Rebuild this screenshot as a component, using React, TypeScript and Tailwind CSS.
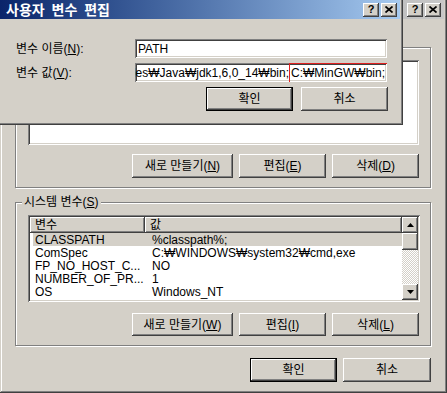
import React from 'react';

const raised = 'shadow-[inset_-1px_-1px_#404040,inset_1px_1px_#fff,inset_-2px_-2px_#808080,inset_2px_2px_#d4d0c8]';
const frame = 'shadow-[inset_-1px_-1px_#404040,inset_1px_1px_#d4d0c8,inset_-2px_-2px_#808080,inset_2px_2px_#fff]';
const sunken = 'shadow-[inset_1px_1px_#808080,inset_-1px_-1px_#fff,inset_2px_2px_#404040,inset_-2px_-2px_#d4d0c8]';
const etched = 'border border-[#808080] shadow-[inset_1px_1px_#fff,1px_1px_#fff]';

function TitleBtn({ kind }: { kind: 'help' | 'close' }) {
  return (
    <div className={`w-[16px] h-[14px] bg-[#d4d0c8] flex items-center justify-center ${raised}`}>
      {kind === 'help' ? (
        <span className="text-[11px] font-bold leading-none -mt-[1px]">?</span>
      ) : (
        <svg width="8" height="7" viewBox="0 0 8 7" className="-mt-[1px]">
          <path d="M0.5 0.5 L7.5 6.5 M7.5 0.5 L0.5 6.5" stroke="#000" strokeWidth="1.7" />
        </svg>
      )}
    </div>
  );
}

function Btn({ children, w = 'w-[87px]', h = 'h-[23px]', def = false }: { children: React.ReactNode; w?: string; h?: string; def?: boolean }) {
  if (def) {
    return (
      <div className={`${w} ${h} border border-black bg-[#d4d0c8]`}>
        <div className={`w-full h-full flex items-center justify-center ${raised}`}>{children}</div>
      </div>
    );
  }
  return <div className={`${w} ${h} bg-[#d4d0c8] flex items-center justify-center ${raised}`}>{children}</div>;
}

function Arrow({ up }: { up?: boolean }) {
  return (
    <div className={`w-[16px] h-[16px] bg-[#d4d0c8] flex items-center justify-center ${raised}`}>
      <svg width="7" height="4" viewBox="0 0 7 4">
        <polygon points={up ? '0,4 7,4 3.5,0' : '0,0 7,0 3.5,4'} fill="#000" />
      </svg>
    </div>
  );
}

const rows: [string, string][] = [
  ['CLASSPATH', '%classpath%;'],
  ['ComSpec', 'C:₩WINDOWS₩system32₩cmd,exe'],
  ['FP_NO_HOST_C...', 'NO'],
  ['NUMBER_OF_PR...', '1'],
  ['OS', 'Windows_NT'],
  ['Path', 'C:₩Program Files₩Common Files₩Nokia'],
];

export default function App() {
  return (
    <div className="relative w-[447px] h-[393px] overflow-hidden bg-[#d4d0c8] font-['Liberation_Sans','Noto_Sans_CJK_KR',sans-serif] text-[12px] leading-none text-black">
      {/* 환경 변수 (뒤 창) */}
      <div className={`-mt-[3px] h-[396px] w-[447px] p-[3px] flex flex-col bg-[#d4d0c8] ${frame}`}>
        <div className="h-[19px] shrink-0 flex items-center justify-end gap-[2px] pr-[3px] bg-linear-to-r from-[#808080] to-[#c8c8c8]">
          <TitleBtn kind="help" />
          <TitleBtn kind="close" />
        </div>

        <div className="flex flex-col pl-[12px]">
          {/* 사용자 변수 */}
          <div className={`mt-[28px] w-[416px] h-[141px] flex flex-col ${etched}`}>
            <div className={`ml-[12px] mt-[12px] w-[391px] h-[85px] bg-white ${sunken}`} />
            <div className="mt-[9px] flex justify-end gap-[6px] pr-[11px]">
              <Btn w="w-[101px]" h="h-[24px]">새로 만들기(<u>N</u>)</Btn>
              <Btn h="h-[24px]">편집(<u>E</u>)</Btn>
              <Btn h="h-[24px]">삭제(<u>D</u>)</Btn>
            </div>
          </div>

          {/* 시스템 변수 */}
          <div className={`relative mt-[14px] w-[416px] h-[144px] flex flex-col ${etched}`}>
            <span className="absolute left-[6px] -top-[7px] px-[2px] bg-[#d4d0c8]">시스템 변수(<u>S</u>)</span>
            <div className={`ml-[12px] mt-[12px] w-[392px] h-[87px] p-[2px] bg-white flex ${sunken}`}>
              <div className="flex-1 flex flex-col overflow-hidden">
                <div className="h-[16px] shrink-0 flex">
                  <div className={`w-[115px] h-full flex items-center pl-[5px] bg-[#d4d0c8] ${raised}`}>변수</div>
                  <div className={`flex-1 h-full flex items-center pl-[5px] bg-[#d4d0c8] ${raised}`}>값</div>
                </div>
                {rows.map(([k, v], i) => (
                  <div key={k} className={`h-[13px] shrink-0 flex items-center whitespace-nowrap ${i === 0 ? 'ml-[3px] bg-[#d4d0c8]' : 'ml-[3px]'}`}>
                    <span className="w-[112px] pl-[2px]">{k}</span>
                    <span className="pl-[7px]">{v}</span>
                  </div>
                ))}
              </div>
              <div className="w-[16px] flex flex-col">
                <Arrow up />
                <div className={`h-[17px] bg-[#d4d0c8] ${raised}`} />
                <div className="flex-1 bg-[repeating-conic-gradient(#d4d0c8_0_25%,#fff_0_50%)] bg-[length:2px_2px]" />
                <Arrow />
              </div>
            </div>
            <div className="mt-[11px] flex justify-end gap-[6px] pr-[11px]">
              <Btn w="w-[101px]">새로 만들기(<u>W</u>)</Btn>
              <Btn>편집(<u>I</u>)</Btn>
              <Btn>삭제(<u>L</u>)</Btn>
            </div>
          </div>
        </div>

        <div className="mt-[12px] flex justify-end gap-[6px] pr-[13px]">
          <Btn def h="h-[24px]">확인</Btn>
          <Btn w="w-[88px]" h="h-[24px]">취소</Btn>
        </div>
      </div>

      {/* 사용자 변수 편집 (앞 창) */}
      <div className={`absolute -left-[3px] -top-[3px] w-[406px] h-[128px] p-[3px] flex flex-col bg-[#d4d0c8] ${frame}`}>
        <div className="h-[19px] shrink-0 flex items-center justify-between pl-[6px] pr-[3px] bg-linear-to-r from-[#0a246a] to-[#a6caf0]">
          <span className="text-[14px] font-bold text-white [word-spacing:3px]">사용자 변수 편집</span>
          <div className="flex gap-[2px]">
            <TitleBtn kind="help" />
            <TitleBtn kind="close" />
          </div>
        </div>
        <div className="flex flex-col pl-[16px]">
          <div className="mt-[20px] flex items-center">
            <span className="w-[119px]">변수 이름(<u>N</u>):</span>
            <div className={`w-[252px] h-[19px] pl-[3px] flex items-center bg-white ${sunken}`}>PATH</div>
          </div>
          <div className="mt-[5px] flex items-center">
            <span className="w-[119px]">변수 값(<u>V</u>):</span>
            <div className={`w-[252px] h-[19px] p-[2px] flex items-center justify-end overflow-hidden whitespace-nowrap bg-white ${sunken}`}>
              <span className="shrink-0">C:₩Program Files₩Java₩jdk1,6,0_14₩bin;</span>
              <span className="shrink-0 -my-[2px] -mr-[3px] h-[20px] pl-[1px] pr-[2px] flex items-center border border-[#e02020]">C:₩MinGW₩bin;</span>
            </div>
          </div>
          <div className="mt-[5px] flex justify-end gap-[8px] pr-[12px]">
            <Btn def h="h-[24px]">확인</Btn>
            <Btn h="h-[24px]">취소</Btn>
          </div>
        </div>
      </div>
    </div>
  );
}
